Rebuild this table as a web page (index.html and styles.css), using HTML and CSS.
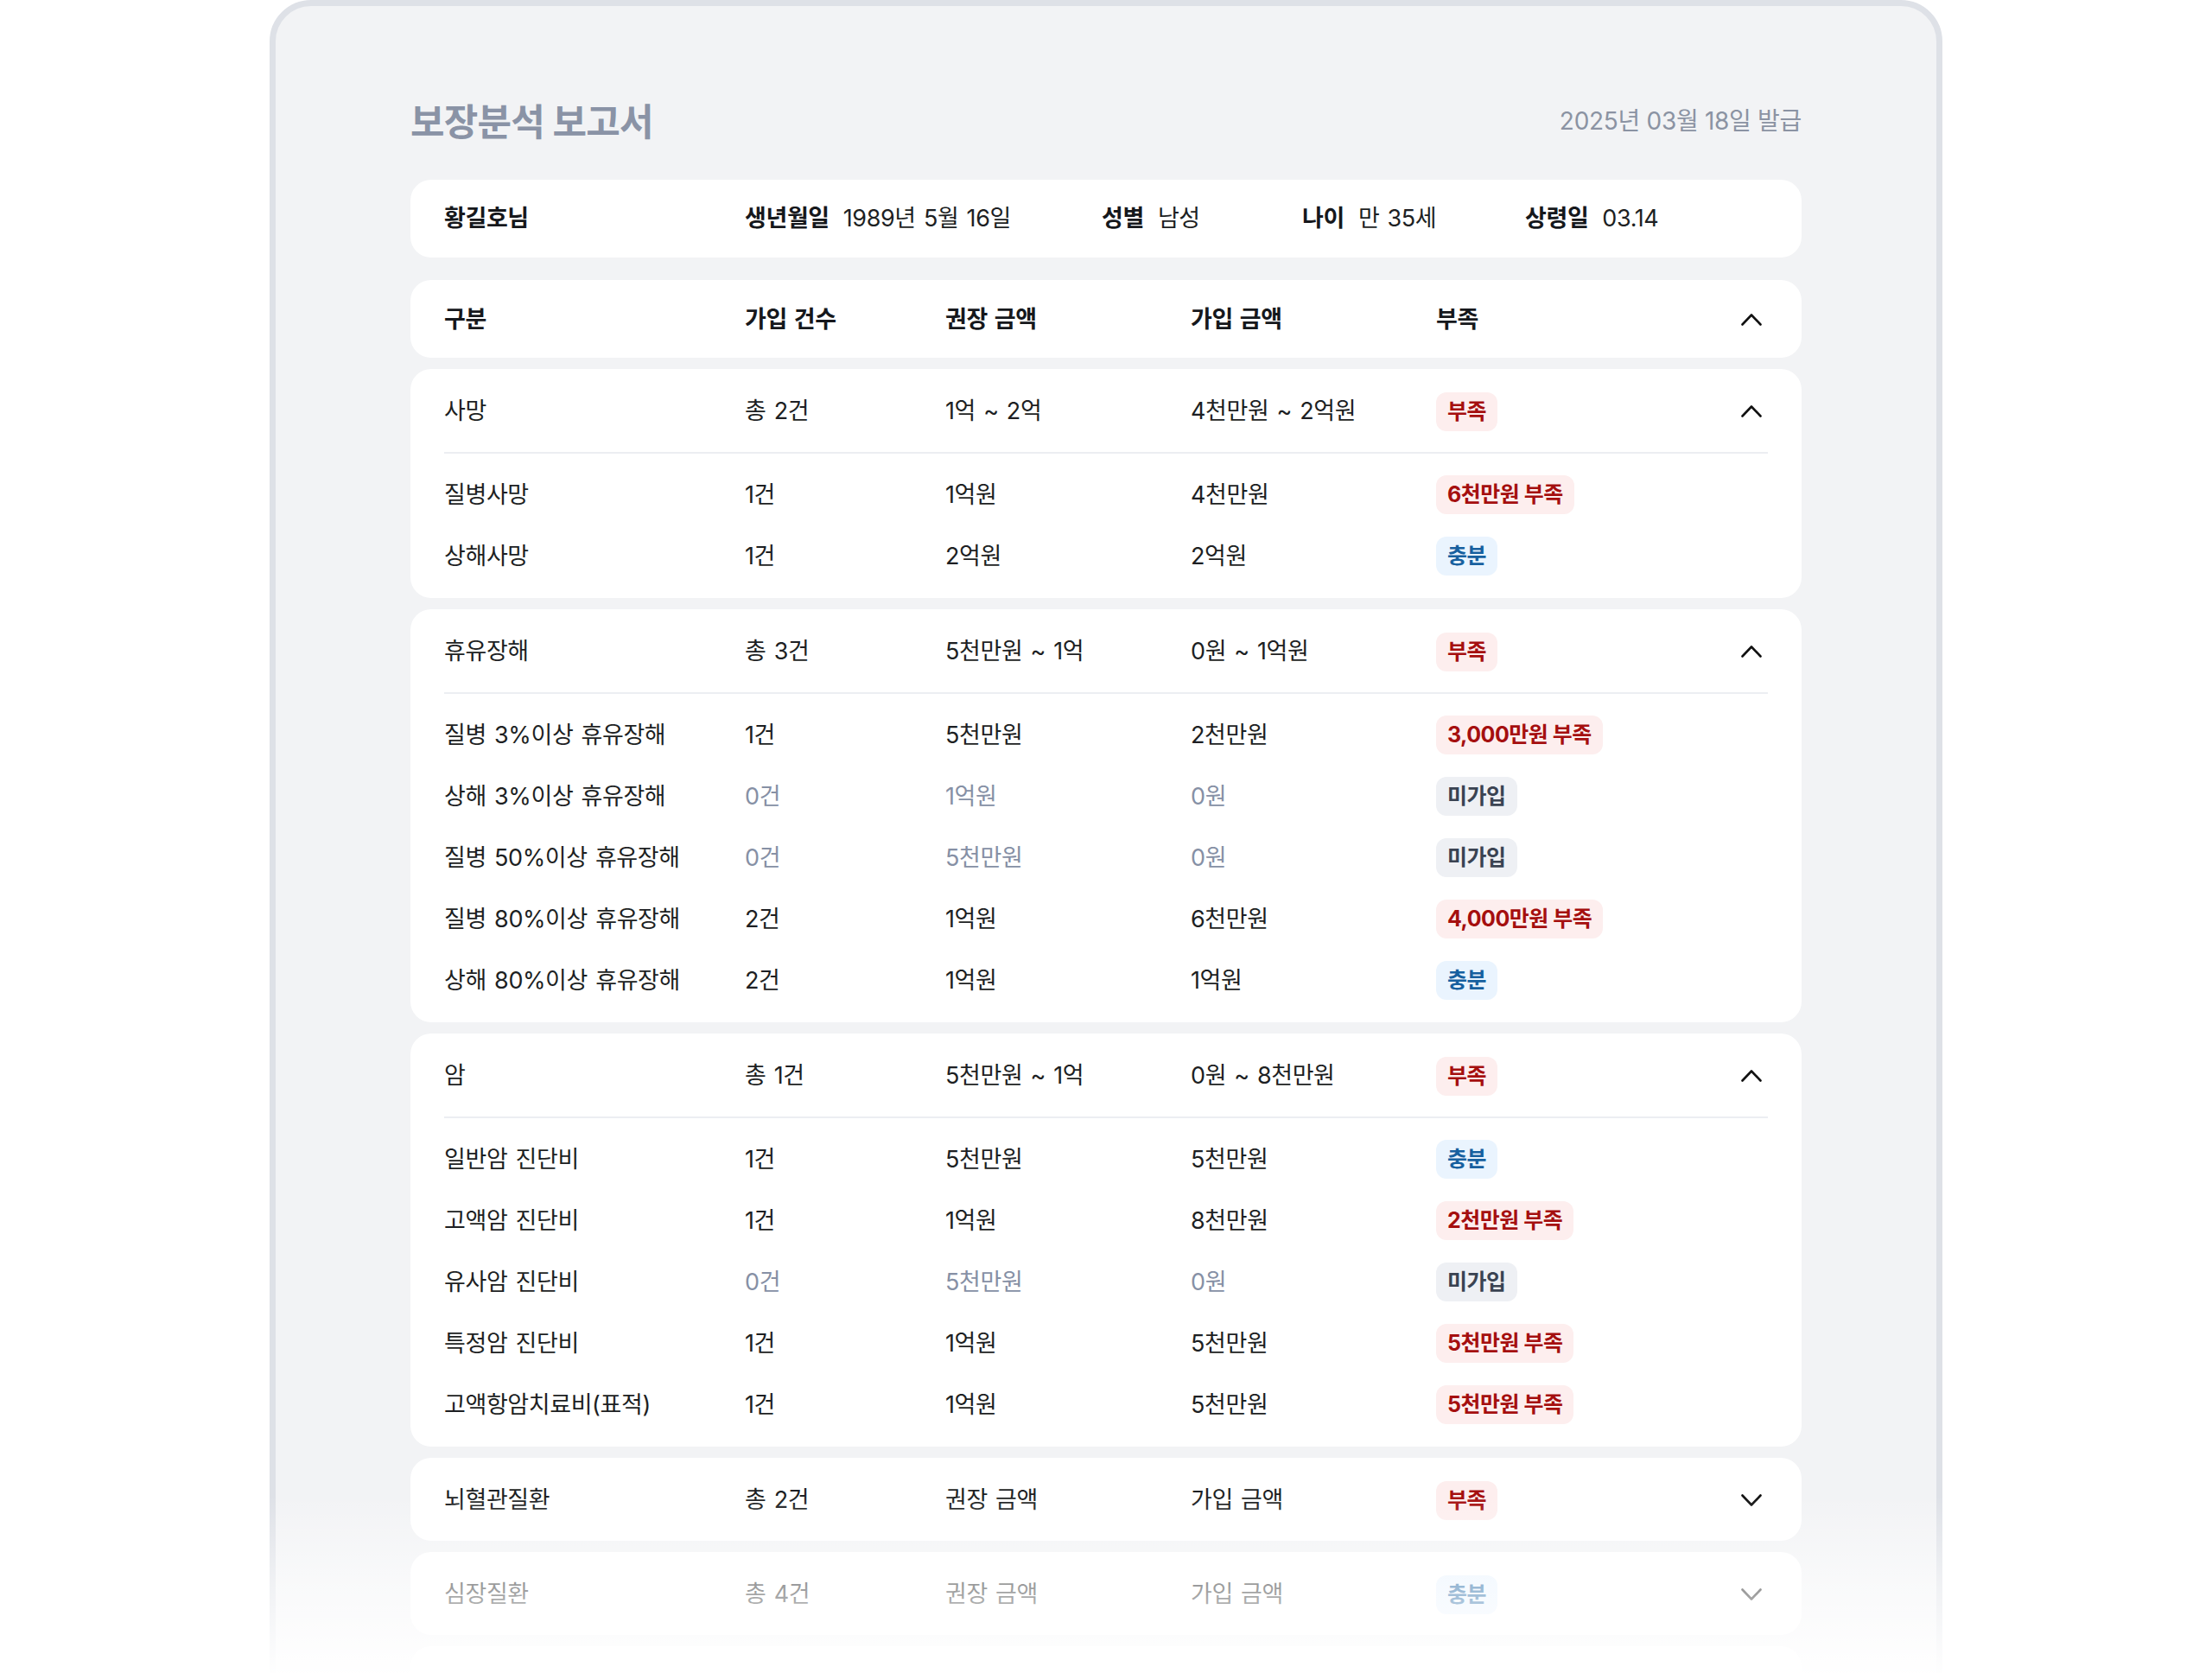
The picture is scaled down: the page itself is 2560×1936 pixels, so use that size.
FILE: index.html
```html
<!DOCTYPE html>
<html lang="ko">
<head>
<meta charset="utf-8">
<title>보장분석 보고서</title>
<link rel="stylesheet" href="styles.css">
</head>
<body>
<div class="page">
  <div class="frame">
    <header class="report-head">
      <h1 class="title">보장분석 보고서</h1>
      <span class="date">2025년 03월 18일 발급</span>
    </header>

    <section class="card info">
      <div class="info-name">황길호님</div>
      <div class="info-item"><span class="label">생년월일</span><span>1989년 5월 16일</span></div>
      <div class="info-item"><span class="label">성별</span><span>남성</span></div>
      <div class="info-item"><span class="label">나이</span><span>만 35세</span></div>
      <div class="info-item"><span class="label">상령일</span><span>03.14</span></div>
    </section>

    <div class="card row thead">
      <span>구분</span><span>가입 건수</span><span>권장 금액</span><span>가입 금액</span><span>부족</span>
      <span class="chev"><svg viewBox="0 0 24 24" width="24" height="24"><polyline points="1.5,17.5 12,6.5 22.5,17.5"/></svg></span>
    </div>

    <section class="card group">
      <div class="row main">
        <span>사망</span><span>총 2건</span><span>1억 ~ 2억</span><span>4천만원 ~ 2억원</span><span><b class="badge short">부족</b></span>
        <span class="chev"><svg viewBox="0 0 24 24" width="24" height="24"><polyline points="1.5,17.5 12,6.5 22.5,17.5"/></svg></span>
      </div>
      <div class="subs">
        <div class="row sub"><span>질병사망</span><span>1건</span><span>1억원</span><span>4천만원</span><span><b class="badge short">6천만원 부족</b></span></div>
        <div class="row sub"><span>상해사망</span><span>1건</span><span>2억원</span><span>2억원</span><span><b class="badge ok">충분</b></span></div>
      </div>
    </section>

    <section class="card group">
      <div class="row main">
        <span>휴유장해</span><span>총 3건</span><span>5천만원 ~ 1억</span><span>0원 ~ 1억원</span><span><b class="badge short">부족</b></span>
        <span class="chev"><svg viewBox="0 0 24 24" width="24" height="24"><polyline points="1.5,17.5 12,6.5 22.5,17.5"/></svg></span>
      </div>
      <div class="subs">
        <div class="row sub"><span>질병 3%이상 휴유장해</span><span>1건</span><span>5천만원</span><span>2천만원</span><span><b class="badge short">3,000만원 부족</b></span></div>
        <div class="row sub none"><span>상해 3%이상 휴유장해</span><span>0건</span><span>1억원</span><span>0원</span><span><b class="badge na">미가입</b></span></div>
        <div class="row sub none"><span>질병 50%이상 휴유장해</span><span>0건</span><span>5천만원</span><span>0원</span><span><b class="badge na">미가입</b></span></div>
        <div class="row sub"><span>질병 80%이상 휴유장해</span><span>2건</span><span>1억원</span><span>6천만원</span><span><b class="badge short">4,000만원 부족</b></span></div>
        <div class="row sub"><span>상해 80%이상 휴유장해</span><span>2건</span><span>1억원</span><span>1억원</span><span><b class="badge ok">충분</b></span></div>
      </div>
    </section>

    <section class="card group">
      <div class="row main">
        <span>암</span><span>총 1건</span><span>5천만원 ~ 1억</span><span>0원 ~ 8천만원</span><span><b class="badge short">부족</b></span>
        <span class="chev"><svg viewBox="0 0 24 24" width="24" height="24"><polyline points="1.5,17.5 12,6.5 22.5,17.5"/></svg></span>
      </div>
      <div class="subs">
        <div class="row sub"><span>일반암 진단비</span><span>1건</span><span>5천만원</span><span>5천만원</span><span><b class="badge ok">충분</b></span></div>
        <div class="row sub"><span>고액암 진단비</span><span>1건</span><span>1억원</span><span>8천만원</span><span><b class="badge short">2천만원 부족</b></span></div>
        <div class="row sub none"><span>유사암 진단비</span><span>0건</span><span>5천만원</span><span>0원</span><span><b class="badge na">미가입</b></span></div>
        <div class="row sub"><span>특정암 진단비</span><span>1건</span><span>1억원</span><span>5천만원</span><span><b class="badge short">5천만원 부족</b></span></div>
        <div class="row sub"><span>고액항암치료비(표적)</span><span>1건</span><span>1억원</span><span>5천만원</span><span><b class="badge short">5천만원 부족</b></span></div>
      </div>
    </section>

    <section class="card group">
      <div class="row main">
        <span>뇌혈관질환</span><span>총 2건</span><span>권장 금액</span><span>가입 금액</span><span><b class="badge short">부족</b></span>
        <span class="chev"><svg viewBox="0 0 24 24" width="24" height="24"><polyline points="1.5,6.5 12,17.5 22.5,6.5"/></svg></span>
      </div>
    </section>

    <section class="card group">
      <div class="row main">
        <span>심장질환</span><span>총 4건</span><span>권장 금액</span><span>가입 금액</span><span><b class="badge ok">충분</b></span>
        <span class="chev"><svg viewBox="0 0 24 24" width="24" height="24"><polyline points="1.5,6.5 12,17.5 22.5,6.5"/></svg></span>
      </div>
    </section>

    <section class="card group">
      <div class="row main"></div>
    </section>
  </div>
  <div class="fade"></div>
</div>
</body>
</html>
```

FILE: styles.css
```css
* { box-sizing: border-box; }

html, body {
  margin: 0;
  padding: 0;
  height: 1936px;
  overflow: hidden;
  background: #ffffff;
}

body {
  font-family: Inter, "Noto Sans CJK KR", sans-serif;
  color: #1d1f23;
  font-size: 27px;
  line-height: 1.4;
  letter-spacing: -0.4px;
  word-spacing: 2px;
}

.page {
  position: relative;
  height: 1936px;
  overflow: hidden;
}

.frame {
  width: 1936px;
  margin: 0 auto;
  min-height: 2100px;
  background: #f2f3f5;
  border: 7px solid #dee1e7;
  border-radius: 48px;
  padding: 110px 156px 0;
}

.report-head {
  display: flex;
  align-items: center;
  justify-content: space-between;
  height: 48px;
  margin-bottom: 43px;
}

.title {
  margin: 0;
  font-size: 43px;
  font-weight: 700;
  letter-spacing: -0.8px;
  word-spacing: 0;
  color: #8a93a6;
  line-height: 48px;
}

.date {
  font-size: 28px;
  color: #8b93a3;
  letter-spacing: -0.3px;
  word-spacing: 0;
}

.card {
  background: #ffffff;
  border-radius: 24px;
  padding: 0 39px;
}

.info {
  height: 90px;
  display: grid;
  grid-template-columns: 348px 413px 232px 258px 1fr;
  align-items: center;
  margin-bottom: 26px;
}

.info-name,
.label {
  font-weight: 700;
  color: #16181c;
}

.info-item {
  display: flex;
  align-items: baseline;
  gap: 16px;
}

.row {
  display: grid;
  grid-template-columns: 348px 232px 284px 284px 1fr 34px;
  align-items: center;
}

.thead {
  height: 90px;
  padding-top: 2px;
  font-weight: 700;
  color: #16181c;
  margin-bottom: 13px;
}

.chev {
  justify-self: end;
  margin-right: 7px;
  display: flex;
}

.chev svg {
  fill: none;
  stroke: #111111;
  stroke-width: 2.6;
  stroke-linecap: round;
  stroke-linejoin: round;
}

.group {
  margin-bottom: 13px;
}

.main {
  height: 96px;
  padding-top: 2px;
}

.subs {
  border-top: 2px solid #eceef2;
  padding: 11px 0 14px;
}

.sub {
  height: 71px;
  padding-top: 2px;
}

.sub.none span:nth-child(2),
.sub.none span:nth-child(3),
.sub.none span:nth-child(4) {
  color: #8690a5;
}

.badge {
  display: inline-flex;
  align-items: center;
  height: 45px;
  padding: 0 13px;
  border-radius: 12px;
  font-size: 25px;
  font-weight: 700;
  letter-spacing: -0.5px;
  word-spacing: 0;
  vertical-align: middle;
}

.badge.short {
  background: #fdeeee;
  color: #a50f0f;
}

.badge.ok {
  background: #eaf4fe;
  color: #17609f;
}

.badge.na {
  background: #eef0f4;
  color: #3a4352;
}

.fade {
  position: absolute;
  left: 0;
  right: 0;
  top: 1730px;
  height: 206px;
  background: linear-gradient(to bottom, rgba(255,255,255,0) 0%, rgba(255,255,255,0.55) 50%, rgba(255,255,255,0.97) 100%);
  pointer-events: none;
}
```
